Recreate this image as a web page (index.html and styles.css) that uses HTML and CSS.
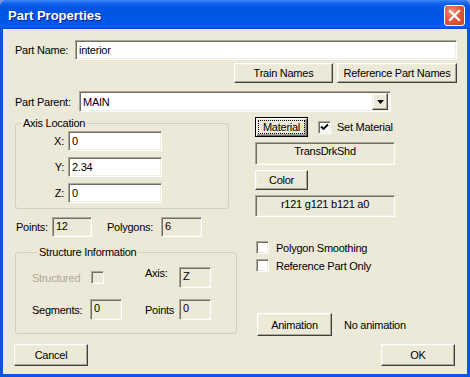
FILE: index.html
```html
<!DOCTYPE html>
<html lang="en">
<head>
  <meta charset="UTF-8" />
  <title>Part Properties</title>
  <link rel="stylesheet" href="styles.css">
</head>
<body>
  <div class="window">
    <div class="titlebar">
      <span class="title">Part Properties</span>
      <button class="close" aria-label="Close">
        <svg width="13" height="13" viewBox="0 0 13 13"><path d="M2 2 L11 11 M11 2 L2 11" stroke="#fff" stroke-width="2.2" stroke-linecap="square" fill="none"/></svg>
      </button>
    </div>

    <div class="client">
      <div class="row name-row">
        <span class="lbl name-lbl">Part Name:</span>
        <div class="field name-field">interior</div>
      </div>

      <div class="row name-buttons">
        <button class="btn train-btn">Train Names</button>
        <button class="btn ref-btn">Reference Part Names</button>
      </div>

      <div class="row parent-row">
        <span class="lbl parent-lbl">Part Parent:</span>
        <div class="combo">
          <span class="combo-text">MAIN</span>
          <span class="combo-btn">
            <svg width="7" height="4" viewBox="0 0 7 4"><path d="M0 0 H7 L3.5 4 Z" fill="#000"/></svg>
          </span>
        </div>
      </div>

      <div class="main">
        <div class="left">
          <fieldset class="group axis-group">
            <legend>Axis Location</legend>
            <div class="axis-grid">
              <span class="axis-lbl">X:</span><div class="field axis-field">0</div>
              <span class="axis-lbl">Y:</span><div class="field axis-field">2.34</div>
              <span class="axis-lbl">Z:</span><div class="field axis-field">0</div>
            </div>
          </fieldset>

          <div class="counts">
            <span class="points-lbl">Points:</span>
            <div class="field ro count-box">12</div>
            <span class="poly-lbl">Polygons:</span>
            <div class="field ro count-box poly-box">6</div>
          </div>

          <fieldset class="group struct-group">
            <legend>Structure Information</legend>
            <div class="struct-grid">
              <span class="disabled">Structured</span>
              <span class="check disabled-check"></span>
              <span class="struct-lbl2 axis-top">Axis:</span>
              <div class="field ro small-box">Z</div>

              <span>Segments:</span>
              <div class="field ro small-box">0</div>
              <span class="struct-lbl2">Points</span>
              <div class="field ro small-box">0</div>
            </div>
          </fieldset>
        </div>

        <div class="right">
          <div class="material-row">
            <button class="btn default-btn"><span class="focus-rect">Material</span></button>
            <span class="check set-check">
              <svg width="9" height="9" viewBox="0 0 9 9"><path d="M1 3.5 L3.5 6 L8 1.5" stroke="#000" stroke-width="1.8" fill="none"/></svg>
            </span>
            <span class="set-lbl">Set Material</span>
          </div>
          <div class="field ro readout material-box">TransDrkShd</div>
          <button class="btn color-btn">Color</button>
          <div class="field ro readout color-box">r121 g121 b121 a0</div>

          <div class="check-row smooth-row">
            <span class="check"></span>
            <span>Polygon Smoothing</span>
          </div>
          <div class="check-row refonly-row">
            <span class="check"></span>
            <span>Reference Part Only</span>
          </div>

          <div class="anim-row">
            <button class="btn anim-btn">Animation</button>
            <span class="anim-lbl">No animation</span>
          </div>
        </div>
      </div>

      <div class="footer">
        <button class="btn footer-btn">Cancel</button>
        <button class="btn footer-btn">OK</button>
      </div>
    </div>
  </div>
</body>
</html>
```

FILE: styles.css
```css
* {
  box-sizing: border-box;
}
html, body {
  margin: 0;
}
body {
  background: #7a96df;
  font-family: "Liberation Sans", Arial, sans-serif;
  font-size: 11px;
  letter-spacing: -0.25px;
  color: #000;
}
.window {
  width: 470px;
  height: 377px;
  background: #0a56e4;
  border-radius: 7px 7px 0 0;
  display: flex;
  flex-direction: column;
  overflow: hidden;
}
.titlebar {
  height: 29px;
  flex: none;
  display: flex;
  align-items: center;
  padding: 2px 5px 0 8px;
  background: linear-gradient(180deg, #3c8cf5 0, #1668ee 3px, #0558e6 6px, #0054e3 45%, #0058e8 80%, #0a5fef 92%, #0048d8 100%);
}
.title {
  flex: 1;
  color: #fff;
  font-weight: bold;
  font-size: 13px;
  letter-spacing: 0;
  text-shadow: 1px 1px #0f1c89;
}
.close {
  width: 21px;
  height: 21px;
  padding: 0;
  border: 1px solid #fff;
  border-radius: 3px;
  background: radial-gradient(circle at 35% 30%, #f0927a 0, #e05a3a 45%, #c8431f 100%);
  display: flex;
  align-items: center;
  justify-content: center;
}
.client {
  flex: 1;
  margin: 0 3px 3px;
  background: #ece9d8;
  padding: 11px 10px 8px 11px;
  display: flex;
  flex-direction: column;
}
.row {
  display: flex;
  align-items: center;
}
.lbl {
  padding-left: 1px;
}
.field {
  background: #fff;
  border: 1px solid;
  border-color: #aca899 #fff #fff #aca899;
  box-shadow: inset 1px 1px #716f64, inset -1px -1px #f1efe2;
  padding: 0 3px;
  display: flex;
  align-items: center;
  white-space: nowrap;
}
.field.ro {
  background: #ece9d8;
  align-items: flex-start;
  padding-top: 2px;
}
.btn {
  background: #ece9d8;
  border: 1px solid;
  border-color: #fff #404040 #404040 #fff;
  box-shadow: inset -1px -1px #aca899, inset 1px 1px #f1efe2;
  font-family: inherit;
  font-size: 11px;
  letter-spacing: inherit;
  color: #000;
  padding: 0;
  display: flex;
  align-items: center;
  justify-content: center;
}

/* top rows */
.name-row {
  height: 20px;
}
.name-lbl {
  width: 61px;
}
.name-field {
  flex: 1;
  height: 20px;
}
.name-buttons {
  margin-top: 3px;
  justify-content: flex-end;
  gap: 4px;
}
.name-buttons .btn {
  height: 20px;
}
.train-btn {
  width: 99px;
}
.ref-btn {
  width: 120px;
}
.parent-row {
  margin-top: 8px;
  height: 21px;
}
.parent-lbl {
  width: 65px;
}
.combo {
  width: 312px;
  height: 21px;
  background: #fff;
  border: 1px solid;
  border-color: #aca899 #fff #fff #aca899;
  box-shadow: inset 1px 1px #716f64, inset -1px -1px #f1efe2;
  padding: 2px 2px 2px 3px;
  display: flex;
  align-items: center;
}
.combo-text {
  flex: 1;
}
.combo-btn {
  width: 16px;
  height: 17px;
  background: #ece9d8;
  border: 1px solid;
  border-color: #f1efe2 #404040 #404040 #f1efe2;
  box-shadow: inset -1px -1px #aca899, inset 1px 1px #fff;
  display: flex;
  align-items: center;
  justify-content: center;
}

/* main area */
.main {
  margin-top: 5px;
  display: flex;
}
.left {
  width: 224px;
}
.right {
  margin-left: 17px;
  display: flex;
  flex-direction: column;
  align-items: flex-start;
}
.group {
  margin: 0 0 0 1px;
  padding: 0;
  border: 1px solid #d0d0bf;
  border-radius: 3px;
  min-width: 0;
}
.group legend {
  margin-left: 5px;
  padding: 0 2px;
  line-height: 13px;
}
.axis-group {
  width: 214px;
  padding: 1px 0 5px 0;
}
.axis-grid {
  display: grid;
  grid-template-columns: 48px 94px;
  grid-auto-rows: 20px;
  column-gap: 4px;
  row-gap: 6px;
}
.axis-lbl {
  text-align: right;
  align-self: center;
}
.counts {
  margin-top: 8px;
  padding-left: 2px;
  display: flex;
  align-items: center;
  height: 20px;
}
.points-lbl {
  width: 36px;
}
.count-box {
  width: 40px;
  height: 20px;
}
.poly-lbl {
  margin-left: 15px;
  width: 54px;
}
.poly-box {
  width: 41px;
}
.struct-group {
  margin-top: 9px;
  width: 222px;
  padding: 8px 0 13px 16px;
}
.struct-grid {
  display: grid;
  grid-template-columns: 58px 32px 23px 34px 32px;
  grid-template-rows: 21px 21px;
  row-gap: 11px;
  align-items: center;
}
.struct-lbl2 {
  grid-column: 4;
}
.axis-top {
  align-self: start;
}
.small-box {
  height: 21px;
}
.disabled {
  color: #aca899;
}
.check {
  width: 13px;
  height: 13px;
  flex: none;
  background: #fff;
  border: 1px solid;
  border-color: #aca899 #fff #fff #aca899;
  box-shadow: inset 1px 1px #716f64, inset -1px -1px #f1efe2;
  display: flex;
  align-items: center;
  justify-content: center;
}
.disabled-check {
  background: #ece9d8;
  margin-left: 1px;
}

/* right column */
.material-row {
  display: flex;
  align-items: center;
  height: 20px;
}
.default-btn {
  width: 53px;
  height: 20px;
  border-color: #000;
  box-shadow: inset 1px 1px #fff, inset -1px -1px #716f64, inset -2px -2px #aca899;
}
.focus-rect {
  width: 47px;
  height: 14px;
  outline: 1px dotted #000;
  outline-offset: -1px;
  line-height: 14px;
  text-align: center;
}
.set-check {
  margin-left: 10px;
}
.set-lbl {
  margin-left: 6px;
}
.readout {
  width: 140px;
  justify-content: center;
  margin-top: 5px;
}
.material-box {
  height: 23px;
}
.color-box {
  height: 22px;
}
.color-btn {
  width: 53px;
  height: 20px;
  margin-top: 5px;
}
.check-row {
  display: flex;
  align-items: center;
  gap: 7px;
  margin-left: 1px;
  height: 13px;
}
.smooth-row {
  margin-top: 24px;
}
.refonly-row {
  margin-top: 5px;
}
.anim-row {
  margin-top: 41px;
  margin-left: 2px;
  display: flex;
  align-items: center;
}
.anim-btn {
  width: 75px;
  height: 23px;
}
.anim-lbl {
  margin-left: 12px;
}

/* footer */
.footer {
  margin-top: 8px;
  margin-right: 2px;
  display: flex;
  justify-content: space-between;
}
.footer-btn {
  width: 74px;
  height: 22px;
}
```
